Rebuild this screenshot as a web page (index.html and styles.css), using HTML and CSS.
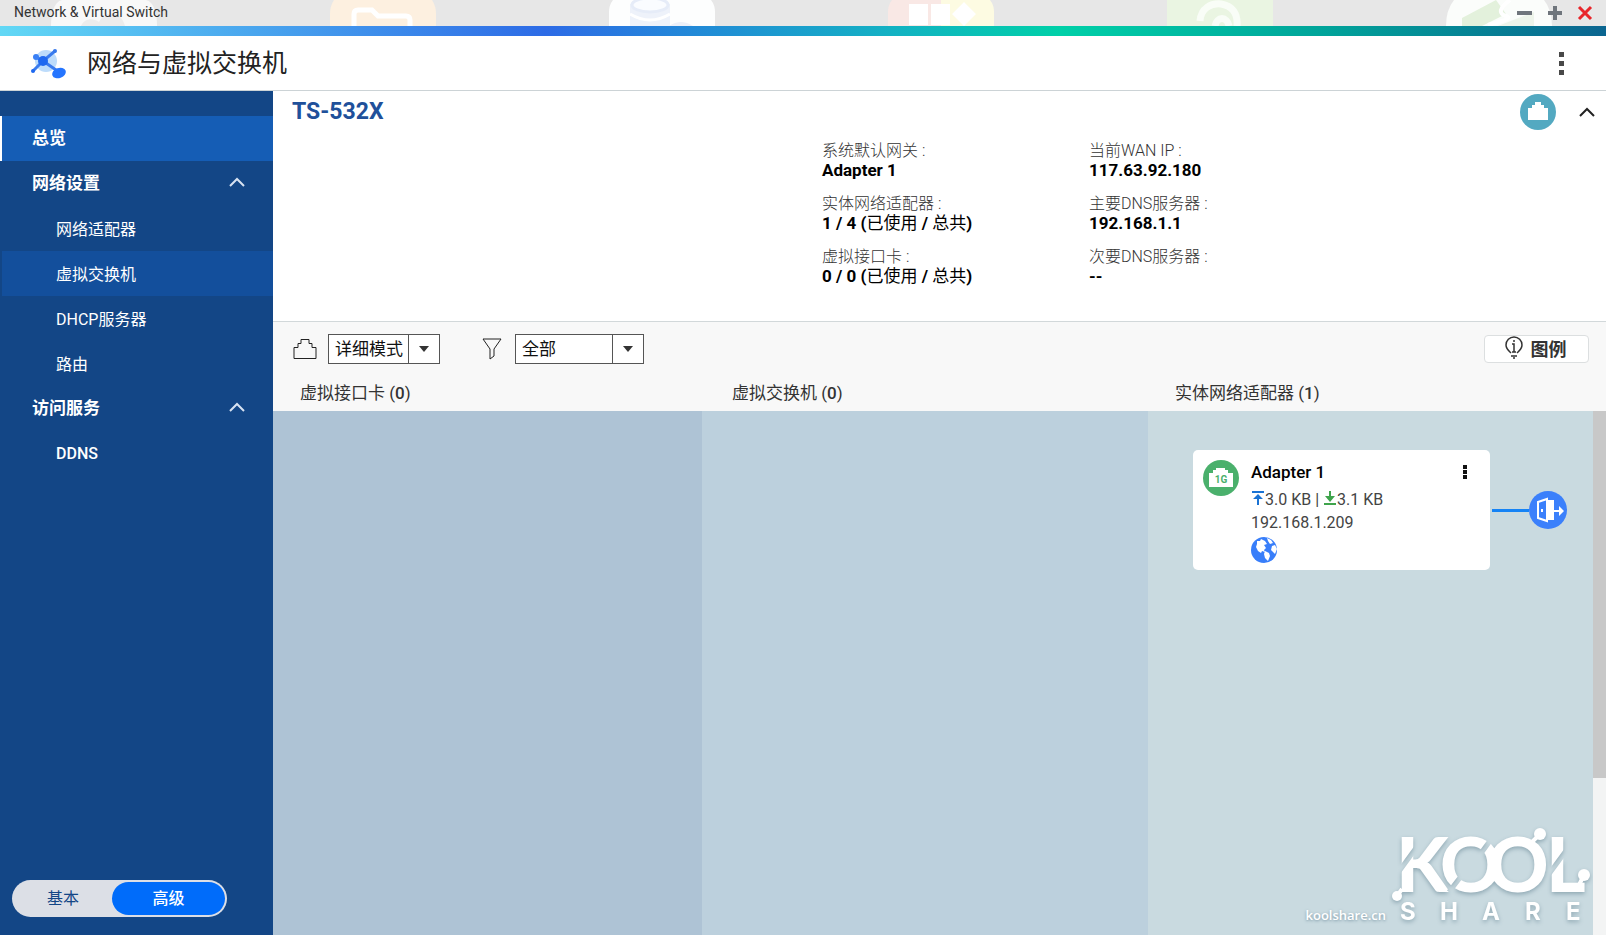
FILE: index.html
```html
<!DOCTYPE html>
<html lang="zh-CN">
<head>
<meta charset="utf-8">
<title>Network &amp; Virtual Switch</title>
<link rel="stylesheet" href="styles.css">
</head>
<body>
<div class="window">
  <header class="titlebar">
    <div class="desktop" aria-hidden="true">
      <svg class="tile" viewBox="0 0 106 26"><path d="M0 26C0 8 6 0 12 0H94C100 0 106 8 106 26Z" fill="#f8f8f8"/><path d="M30 26C34 18 42 18 48 22C54 10 70 10 74 26Z" fill="#ececec"/></svg>
      <svg class="tile" viewBox="0 0 106 26"><path d="M0 26V14Q0 6 4 0H102Q106 6 106 14V26Z" fill="#fdf0e0"/><path d="M24 26V14Q24 10 28 10H42L48 16H76Q80 16 80 20V26" fill="none" stroke="#fff" stroke-width="5"/></svg>
      <svg class="tile" viewBox="0 0 106 26"><path d="M0 26V12Q0 5 4 0H102Q106 5 106 12V26Z" fill="#fdfefe"/><path d="M21 4V26H61V4Z" fill="#eef2fa"/><ellipse cx="41" cy="5" rx="18" ry="7" fill="#fafcff" stroke="#e6ecf8" stroke-width="3"/><path d="M21 14Q41 26 61 14" fill="none" stroke="#fff" stroke-width="3"/><path d="M60 26Q72 18 84 26Z" fill="#edf0f8"/></svg>
      <svg class="tile" viewBox="0 0 106 26"><path d="M0 26V12Q0 5 4 0H53V26Z" fill="#f9e8e5"/><path d="M53 0H102Q106 5 106 12V26H53Z" fill="#fdfbe2"/><path d="M21 4H40V25H21ZM43 4H62V25H43ZM76 2L88 14L76 26L64 14Z" fill="#fff"/></svg>
      <svg class="tile" viewBox="0 0 106 26"><path d="M0 26V0H106V26Z" fill="#eaf5e2"/><path d="M33 21C34 8 44 3 54 4C66 6 71 14 70 26M48 26C50 16 60 16 62 26" fill="none" stroke="#f9fdf7" stroke-width="7"/></svg>
      <svg class="tile" viewBox="0 0 106 26"><path d="M0 26Q0 10 8 0H98Q106 10 106 26Z" fill="#fbfdfb"/><path d="M16 18L50 0L60 14L36 26H16Z" fill="#e3f1dc"/><path d="M64 0Q48 12 60 16Q66 18 56 21T42 25" fill="none" stroke="#fff" stroke-width="4"/><path d="M52 26L88 12V26Z" fill="#edf4ea"/></svg>
    </div>
    <h1 class="titlebar-name">Network &amp; Virtual Switch</h1>
    <div class="window-buttons">
      <button class="icon-button" aria-label="最小化"><svg width="16" height="16" viewBox="0 0 16 16"><path d="M0 8H15" stroke="#6f757c" stroke-width="4"/></svg></button>
      <button class="icon-button" aria-label="最大化"><svg width="16" height="16" viewBox="0 0 16 16"><path d="M1 8H15M8 1V15" stroke="#6f757c" stroke-width="4"/></svg></button>
      <button class="icon-button" aria-label="关闭"><svg width="16" height="16" viewBox="0 0 16 16"><path d="M2 2L14 14M14 2L2 14" stroke="#e8262b" stroke-width="3"/></svg></button>
    </div>
  </header>
  <div class="rainbow"></div>
  <div class="app-header">
    <svg class="app-logo" width="38" height="32" viewBox="0 0 38 32"><circle cx="16" cy="13" r="11" fill="#bddcfb"/><path d="M3 23L13 13L25 3M13 13L29 24M6 9L13 13" stroke="#3a7bee" stroke-width="3" fill="none"/><ellipse cx="13" cy="13" rx="5" ry="5" fill="#1e68f0"/><circle cx="25" cy="3" r="2" fill="#3577ea"/><circle cx="6" cy="9" r="3" fill="#3a80f5"/><circle cx="3" cy="23" r="2" fill="#1e68f0"/><ellipse cx="29" cy="25" rx="7" ry="5" transform="rotate(-20 29 25)" fill="#2575ff"/></svg>
    <h2 class="app-title">网络与虚拟交换机</h2>
    <button class="icon-button" aria-label="更多"><svg width="6" height="24" viewBox="0 0 6 24"><path d="M0 0H5V5H0ZM0 9H5V14H0ZM0 18H5V23H0Z" fill="#484848"/></svg></button>
  </div>
  <div class="body">
    <aside class="sidebar">
      <nav class="nav">
        <a class="nav-item nav-item-current" href="#overview">总览</a>
        <button class="nav-item nav-group">网络设置<svg class="chevron" width="16" height="10" viewBox="0 0 16 10"><path d="M1 9L8 2L15 9"/></svg></button>
        <a class="nav-item nav-sub" href="#adapters">网络适配器</a>
        <a class="nav-item nav-sub nav-sub-hover" href="#switches">虚拟交换机</a>
        <a class="nav-item nav-sub" href="#dhcp">DHCP服务器</a>
        <a class="nav-item nav-sub" href="#route">路由</a>
        <button class="nav-item nav-group">访问服务<svg class="chevron" width="16" height="10" viewBox="0 0 16 10"><path d="M1 9L8 2L15 9"/></svg></button>
        <a class="nav-item nav-sub nav-latin" href="#ddns">DDNS</a>
      </nav>
      <div class="mode">
        <button class="mode-option">基本</button>
        <button class="mode-option mode-option-on">高级</button>
      </div>
    </aside>
    <main class="main">
      <section class="summary">
        <div class="summary-head">
          <h3 class="device">TS-532X</h3>
          <svg width="36" height="36" viewBox="0 0 36 36"><circle cx="18" cy="18" r="18" fill="#53a9c1"/><path d="M8 26V14H12V11H15V8H21V11H24V14H28V26Z" fill="#fff"/></svg>
          <button class="icon-button" aria-label="收起"><svg width="16" height="10" viewBox="0 0 16 10"><path d="M1 9L8 2L15 9" fill="none" stroke="#222" stroke-width="2"/></svg></button>
        </div>
        <div class="facts">
          <dl class="fact-list">
            <div class="fact"><dt>系统默认网关 :</dt><dd>Adapter 1</dd></div>
            <div class="fact"><dt>实体网络适配器 :</dt><dd>1 / 4 (<span class="unit">已使用</span> / <span class="unit">总共</span>)</dd></div>
            <div class="fact"><dt>虚拟接口卡 :</dt><dd>0 / 0 (<span class="unit">已使用</span> / <span class="unit">总共</span>)</dd></div>
          </dl>
          <dl class="fact-list">
            <div class="fact"><dt>当前WAN IP :</dt><dd>117.63.92.180</dd></div>
            <div class="fact"><dt>主要DNS服务器 :</dt><dd>192.168.1.1</dd></div>
            <div class="fact"><dt>次要DNS服务器 :</dt><dd>--</dd></div>
          </dl>
        </div>
      </section>
      <div class="toolbar">
        <svg width="24" height="22" viewBox="0 0 24 22"><path d="M1 20.500H23V9.500H19V5.500H16V1.500H8V5.500H5V9.500H1Z" fill="none" stroke="#222" stroke-width="1"/></svg>
        <div class="picker picker-mode">
          <select class="picker-select" aria-label="显示模式"><option>详细模式</option></select>
          <span class="picker-arrow"><svg width="10" height="6" viewBox="0 0 10 6"><path d="M0 0H10L5 6Z" fill="#333"/></svg></span>
        </div>
        <svg class="filter-icon" width="20" height="22" viewBox="0 0 20 22"><path d="M1 1H19L12 11V18L8 21V11Z" fill="none" stroke="#222" stroke-width="1"/></svg>
        <div class="picker picker-filter">
          <select class="picker-select" aria-label="筛选"><option>全部</option></select>
          <span class="picker-arrow"><svg width="10" height="6" viewBox="0 0 10 6"><path d="M0 0H10L5 6Z" fill="#333"/></svg></span>
        </div>
        <button class="legend"><svg width="18" height="24" viewBox="0 0 18 24"><path d="M6 17C5 16 1 13 1 9A8 8 0 0 1 17 9C17 13 13 16 12 17M6 20H12M8 22H10M7 8H9V16M7 16H11" fill="none" stroke="#333" stroke-width="1.500"/><circle cx="9" cy="5" r="1" fill="#333"/></svg>图例</button>
      </div>
      <div class="column-heads columns">
        <h4 class="column-head">虚拟接口卡 (<b>0</b>)</h4>
        <h4 class="column-head">虚拟交换机 (<b>0</b>)</h4>
        <h4 class="column-head">实体网络适配器 (<b>1</b>)</h4>
      </div>
      <div class="board columns">
        <div class="lane"></div>
        <div class="lane lane-switches"></div>
        <div class="lane lane-adapters">
          <div class="adapter-row">
            <article class="card">
              <svg width="36" height="36" viewBox="0 0 36 36"><circle cx="18" cy="18" r="18" fill="#4ab06c"/><path d="M6 27V13H10V10H13V8H22V10H25V13H30V27Z" fill="#fff"/><text class="speed" x="18" y="23" text-anchor="middle">1G</text></svg>
              <div class="card-text">
                <h5 class="card-title">Adapter 1</h5>
                <p class="card-line"><svg width="14" height="14" viewBox="0 0 14 14"><path d="M1 0H13V2H1ZM7 3L12 8H8V14H6V8H2Z" fill="#1a73d4"/></svg>3.0 KB | <svg width="14" height="14" viewBox="0 0 14 14"><path d="M1 12H13V14H1ZM6 0H8V5H12L7 11L2 5H6Z" fill="#3fa44c"/></svg>3.1 KB</p>
                <p class="card-line">192.168.1.209</p>
                <svg class="globe" width="26" height="26" viewBox="0 0 26 26"><circle cx="13" cy="13" r="13" fill="#387efa"/><path d="M6 4L9 4L10 2L14 4L16 7L13 8L15 11L13 13L14 15L11 14L10 16L7 14L5 10L6 7ZM16 1L20 3L22 6L19 7L17 4ZM21 9L24 8L26 12L24 17L20 13ZM14 14L18 16L19 19L17 24L14 21L13 17Z" fill="#fff"/></svg>
              </div>
              <button class="icon-button card-menu" aria-label="适配器菜单"><svg width="4" height="14" viewBox="0 0 4 14"><path d="M0 0H4V4H0ZM0 5H4V9H0ZM0 10H4V14H0Z" fill="#111"/></svg></button>
            </article>
            <span class="link-line"></span>
            <svg width="38" height="38" viewBox="0 0 38 38"><circle cx="19" cy="19" r="19" fill="#3b80fb"/><path d="M9 11L18 8V30L9 27Z" fill="none" stroke="#fff" stroke-width="2"/><path d="M18 9H25V29H18Z M25 19H30V15L35 20L30 25V21H25Z" fill="#fff"/><path d="M13 18V21" stroke="#fff" stroke-width="2"/></svg>
          </div>
          <div class="watermark">
            <span class="watermark-site">koolshare.cn</span>
            <svg width="204" height="124" viewBox="0 -20 204 124">
              <mask id="slashes" maskUnits="userSpaceOnUse" x="0" y="-20" width="204" height="124">
                <rect y="-20" width="204" height="124" fill="#fff"/>
                <path d="M8 45L38 4M60 63L73 46M90 27L103 9M157 49L182 15" stroke="#000" stroke-width="5"/>
              </mask>
              <g class="watermark-art">
                <text class="kool" x="7 51 98 157" y="63" mask="url(#slashes)">KOOL</text>
                <path d="M141 15L151 5M189 58L195 46M13 60L8 67" class="stem"/>
                <circle cx="151" cy="5" r="6" fill="#fff"/><circle cx="195" cy="46" r="6" fill="#fff"/><circle cx="8" cy="67" r="5" fill="#fff"/>
                <text class="share" x="11 51 93 136 177" y="91">SHARE</text>
              </g>
            </svg>
          </div>
        </div>
        <div class="scrollbar"><div class="thumb"></div></div>
      </div>
    </main>
  </div>
</div>
</body>
</html>
```
FILE: styles.css
```css
* { box-sizing: border-box; }
body, h1, h2, h3, h4, h5, p, dl, dd { margin: 0; }
body { font-family: Roboto, "Noto Sans CJK SC", sans-serif; font-size: 16px; color: #222; background: #fff; }
button, select { font: inherit; color: inherit; }
svg { flex: none; }
.window { display: flex; flex-direction: column; height: 100vh; }
.icon-button { display: flex; padding: 0; border: 0; background: none; }

.titlebar { position: relative; display: flex; align-items: center; height: 26px; padding: 0 13px 0 14px; background: #e7e7e7; overflow: hidden; }
.desktop { position: absolute; inset: 0; display: flex; gap: 173px; padding-left: 51px; }
.tile { width: 106px; height: 26px; }
.titlebar-name { position: relative; flex: 1; padding-bottom: 2px; font-size: 14px; line-height: 24px; font-weight: 400; color: #333; }
.window-buttons { position: relative; display: flex; gap: 14px; }
.rainbow { flex: none; height: 10px; background: linear-gradient(90deg, #62d8f5 0%, #2d6be6 34%, #14b0c4 55%, #00d0a8 66%, #00a59a 82%, #0b6590 100%); }

.app-header { display: flex; align-items: center; flex: none; height: 55px; padding: 2px 41px 0 30px; border-bottom: 1px solid #ccd3d6; }
.app-title { flex: 1; margin-left: 19px; font-size: 25px; line-height: 36px; font-weight: 400; }

.body { display: flex; flex: 1; min-height: 0; }
.sidebar { display: flex; flex-direction: column; justify-content: space-between; flex: none; width: 273px; padding: 25px 0 18px; background: #134686; }
.nav { display: flex; flex-direction: column; }
.nav-item { display: flex; align-items: center; justify-content: space-between; height: 45px; padding: 0 28px 4px 30px; border: 0; border-left: 2px solid transparent; background: none; color: #fff; font-size: 17px; font-weight: 700; text-decoration: none; text-align: left; background-clip: padding-box; }
.nav-item-current { border-left-color: #fff; background-color: #155db5; }
.nav-sub { padding-left: 54px; padding-bottom: 2px; font-size: 16px; font-weight: 400; }
.nav-latin { padding-bottom: 0; font-weight: 500; }
.nav-sub-hover { background-color: #134f9c; }
.chevron { fill: none; stroke: #d7e2f2; stroke-width: 2; }
.mode { display: flex; width: 215px; height: 37px; margin-left: 12px; padding: 2px; border-radius: 19px; background: #dcdfe6; }
.mode-option { flex: 1; padding: 0 0 4px; border: 0; border-radius: 17px; background: none; color: #134686; }
.mode-option-on { flex: none; width: 113px; background: #006cfa; color: #fff; font-weight: 500; }

.main { display: flex; flex-direction: column; flex: 1; min-width: 0; }
.summary { flex: none; height: 231px; padding: 3px 11px 0 19px; border-bottom: 1px solid #d2d8da; }
.summary-head { display: flex; align-items: center; gap: 23px; }
.device { flex: 1; font-size: 23px; line-height: 36px; font-weight: 700; color: #20509a; }
.facts { display: grid; grid-template-columns: 1fr 267px 506px; margin-top: 8px; }
.fact-list:first-child { grid-column: 2; }
.fact { height: 53px; font-size: 16px; line-height: 22px; }
.fact dt { height: 21px; line-height: 25px; font-weight: 300; color: #333; }
.fact dd { font-size: 17px; font-weight: 700; color: #000; }
.unit { font-weight: 400; }

.toolbar { display: flex; align-items: center; flex: none; height: 56px; padding: 0 17px 2px 20px; background: #f8f8f8; }
.picker { position: relative; height: 30px; border: 1px solid #555; background: #fff; }
.picker-mode { width: 112px; margin-left: 11px; }
.picker-filter { width: 129px; margin-left: 13px; }
.filter-icon { margin-left: 42px; }
.picker-select { width: 100%; height: 28px; padding: 0 6px; border: 0; background: none; appearance: none; font-size: 17px; color: #111; }
.picker-arrow { position: absolute; inset: 0 0 0 auto; display: flex; align-items: center; justify-content: center; width: 31px; border-left: 1px solid #555; pointer-events: none; }
.legend { display: flex; align-items: center; justify-content: center; gap: 8px; width: 105px; height: 28px; margin-left: auto; padding: 0 2px 2px 0; border: 1px solid #dcdfe0; border-radius: 4px; background: #fff; font-size: 18px; font-weight: 700; color: #333; }

.columns { display: grid; grid-template-columns: minmax(0, 429fr) minmax(0, 446fr) minmax(0, 445fr) 13px; }
.column-heads { flex: none; height: 33px; background: #f8f8f8; }
.column-head { padding-left: 27px; font-size: 17px; line-height: 30px; font-weight: 400; color: #333; }
.column-head:nth-child(2) { padding-left: 30px; }
.column-head b { font-weight: 500; }
.board { flex: 1; min-height: 0; }
.lane { background: #aec3d5; }
.lane-switches { background: #bcd0dd; }
.lane-adapters { display: flex; flex-direction: column; justify-content: space-between; padding: 39px 26px 0 45px; background: #c9dae0; }
.adapter-row { display: flex; align-items: center; }
.card { display: flex; flex: 1; height: 120px; padding: 10px 23px 0 10px; border-radius: 5px; background: #fff; }
.speed { font-size: 10px; font-weight: 700; fill: #4ab06c; }
.card-text { flex: 1; margin-left: 12px; }
.card-title { margin-bottom: 4px; font-size: 17px; line-height: 24px; font-weight: 500; color: #000; }
.card-line { font-size: 16px; line-height: 23px; color: #444; }
.card-line svg { vertical-align: baseline; }
.globe { display: block; margin-top: 3px; }
.card-menu { height: 14px; margin-top: 5px; }
.link-line { width: 37px; height: 3px; margin-left: 2px; background: #1583f5; }
.scrollbar { background: #f3f4f4; }
.thumb { height: 70%; background: #c8c8c8; }

.watermark { display: flex; align-items: flex-end; align-self: flex-end; margin-right: -26px; padding-bottom: 2px; }
.watermark-site { margin-right: 3px; padding-bottom: 8px; font-family: "Open Sans", sans-serif; font-size: 13px; font-weight: 600; line-height: 20px; color: #fff; text-shadow: 0 1px 3px #7893a2; }
.watermark-art { filter: drop-shadow(0 2px 2px #8fa8b3); }
.kool { font-family: Lato, sans-serif; font-size: 76px; font-weight: 900; fill: #fff; }
.share { font-family: Inter, sans-serif; font-size: 24px; font-weight: 700; fill: #fff; }
.stem { fill: none; stroke: #fff; stroke-width: 4; }
```
